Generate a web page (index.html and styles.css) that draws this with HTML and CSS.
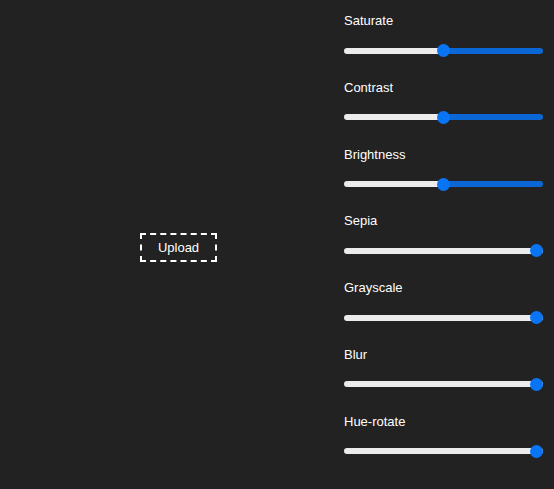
FILE: index.html
```html
<!DOCTYPE html>
<html lang="en">
<head>
<meta charset="utf-8">
<title>Image filters</title>
<link rel="stylesheet" href="styles.css">
</head>
<body>
<div class="app">
  <div class="preview">
    <button class="upload">Upload</button>
  </div>
  <div class="controls">
    <div class="control">
      <label class="label">Saturate</label>
      <input class="range" type="range" min="0" max="200" value="100" style="--p:50%">
    </div>
    <div class="control">
      <label class="label">Contrast</label>
      <input class="range" type="range" min="0" max="200" value="100" style="--p:50%">
    </div>
    <div class="control">
      <label class="label">Brightness</label>
      <input class="range" type="range" min="0" max="200" value="100" style="--p:50%">
    </div>
    <div class="control">
      <label class="label">Sepia</label>
      <input class="range" type="range" min="0" max="100" value="0" style="--p:100%">
    </div>
    <div class="control">
      <label class="label">Grayscale</label>
      <input class="range" type="range" min="0" max="100" value="0" style="--p:100%">
    </div>
    <div class="control">
      <label class="label">Blur</label>
      <input class="range" type="range" min="0" max="10" value="0" style="--p:100%">
    </div>
    <div class="control">
      <label class="label">Hue-rotate</label>
      <input class="range" type="range" min="0" max="360" value="0" style="--p:100%">
    </div>
  </div>
</div>
</body>
</html>
```
FILE: styles.css
```css
html, body {
  margin: 0;
  padding: 0;
  background: #222222;
}
body {
  font-family: "Liberation Sans", Arial, sans-serif;
  font-size: 13px;
  color: #ffffff;
}
.app {
  display: grid;
  grid-template-columns: 344px 199px;
  height: 489px;
}
.preview {
  display: flex;
  align-items: center;
  justify-content: center;
  padding: 6px 0 0 13px;
}
.upload {
  font-family: "Liberation Sans", Arial, sans-serif;
  font-size: 13px;
  line-height: 15px;
  color: #ffffff;
  background: transparent;
  border: 2px dashed #ffffff;
  padding: 5px 16px;
  margin: 0;
}
.controls {
  display: flex;
  flex-direction: column;
  gap: 22.8px;
  padding-top: 13px;
}
.control {
  display: flex;
  flex-direction: column;
  gap: 16px;
}
.label {
  display: block;
  line-height: 15px;
  height: 15px;
}
.range {
  -webkit-appearance: none;
  appearance: none;
  direction: rtl;
  width: 199px;
  height: 13px;
  margin: 0;
  padding: 0;
  background: transparent;
}
.range::-webkit-slider-runnable-track {
  height: 6px;
  border-radius: 3px;
  background: linear-gradient(to right, #ececec var(--p), #0b67d6 var(--p));
}
.range::-webkit-slider-thumb {
  -webkit-appearance: none;
  appearance: none;
  width: 13px;
  height: 13px;
  border-radius: 50%;
  background: #0a75f4;
  border: none;
  margin-top: -3.5px;
}
```
